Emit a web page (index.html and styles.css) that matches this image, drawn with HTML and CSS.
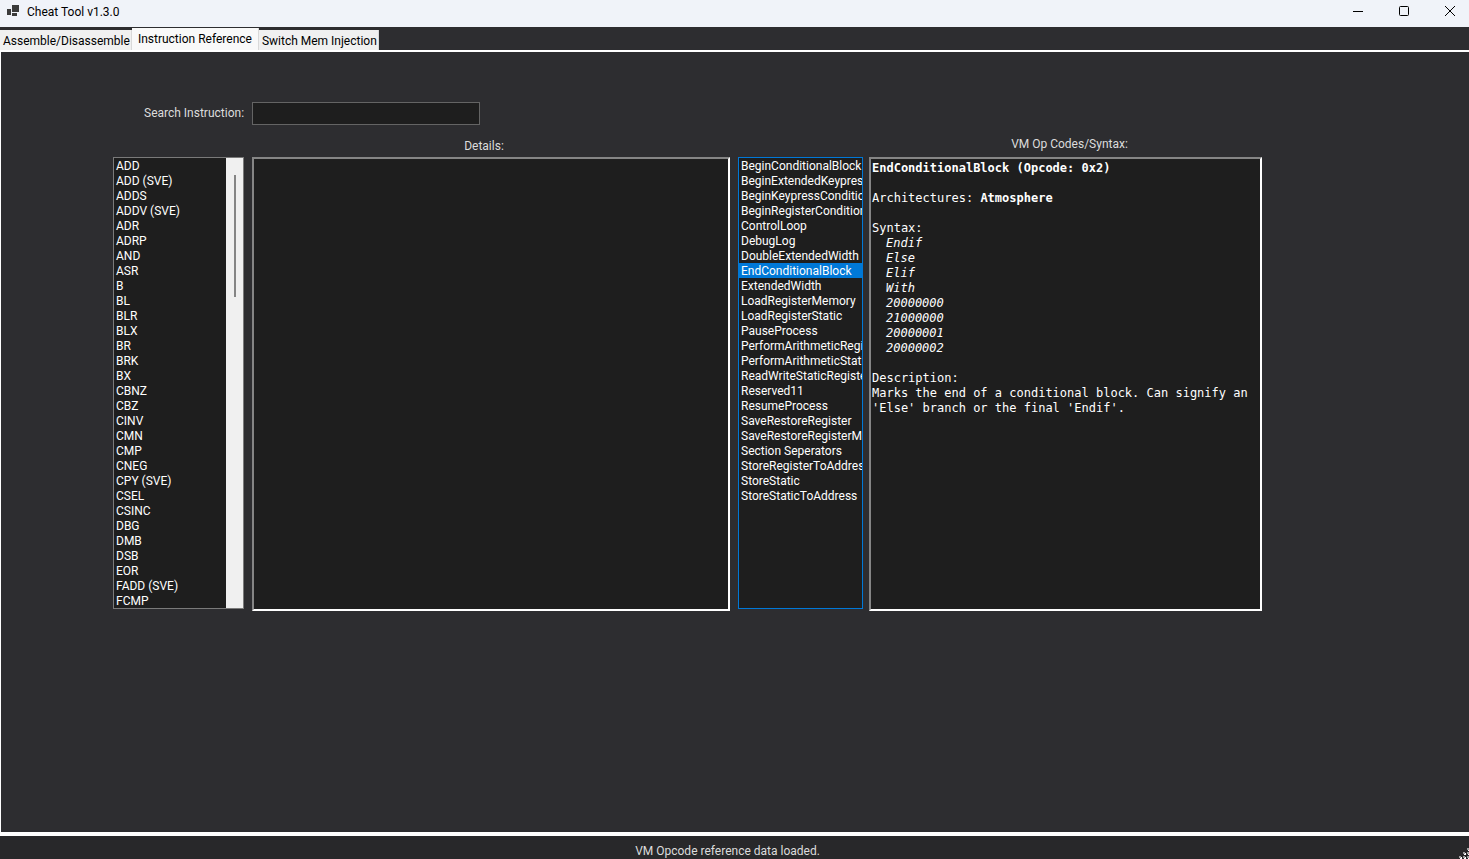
FILE: index.html
```
<!DOCTYPE html>
<html lang="en">
<head>
    <meta charset="UTF-8">
    <title>Cheat Tool v1.3.0</title>
    <link rel="stylesheet" href="styles.css">
</head>
<body>
    <header class="titlebar">
        <svg class="app-icon" width="14" height="14" viewBox="0 0 14 14">
            <path fill="#3b3b3b" d="M1 4h4v6H1zM6 0h7v7H6zM6 8h5v3H6z"/>
        </svg>
        <h1>Cheat Tool v1.3.0</h1>
        <div class="window-buttons">
            <button aria-label="Minimize">
                <svg width="12" height="12" viewBox="0 0 12 12"><path d="M1 6.5h10"/></svg>
            </button>
            <button aria-label="Maximize">
                <svg width="12" height="12" viewBox="0 0 12 12"><rect x="1.5" y="1.5" width="9" height="9" rx="1"/></svg>
            </button>
            <button aria-label="Close">
                <svg width="12" height="12" viewBox="0 0 12 12"><path d="M1 1l10 10M11 1L1 11"/></svg>
            </button>
        </div>
    </header>

    <nav class="tabs" role="tablist">
        <button class="tab" role="tab">Assemble/Disassemble</button>
        <button class="tab active" role="tab" aria-selected="true">Instruction Reference</button>
        <button class="tab" role="tab">Switch Mem Injection</button>
    </nav>

    <main class="page">
        <div class="search">
            <label for="search">Search Instruction:</label>
            <input type="text" id="search">
        </div>

        <div class="panels">
            <div class="list-box">
                <select id="instructions" size="30" aria-label="Instructions">
                    <option>ADD</option>
                    <option>ADD (SVE)</option>
                    <option>ADDS</option>
                    <option>ADDV (SVE)</option>
                    <option>ADR</option>
                    <option>ADRP</option>
                    <option>AND</option>
                    <option>ASR</option>
                    <option>B</option>
                    <option>BL</option>
                    <option>BLR</option>
                    <option>BLX</option>
                    <option>BR</option>
                    <option>BRK</option>
                    <option>BX</option>
                    <option>CBNZ</option>
                    <option>CBZ</option>
                    <option>CINV</option>
                    <option>CMN</option>
                    <option>CMP</option>
                    <option>CNEG</option>
                    <option>CPY (SVE)</option>
                    <option>CSEL</option>
                    <option>CSINC</option>
                    <option>DBG</option>
                    <option>DMB</option>
                    <option>DSB</option>
                    <option>EOR</option>
                    <option>FADD (SVE)</option>
                    <option>FCMP</option>
                </select>
                <div class="scrollbar"><div class="thumb"></div></div>
            </div>

            <section class="details">
                <h2>Details:</h2>
                <div class="text-box"></div>
            </section>

            <div class="list-box focused">
                <select id="opcodes" size="30" aria-label="VM Op Codes">
                    <option>BeginConditionalBlock</option>
                    <option>BeginExtendedKeypressConditionalBlock</option>
                    <option>BeginKeypressConditionalBlock</option>
                    <option>BeginRegisterConditionalBlock</option>
                    <option>ControlLoop</option>
                    <option>DebugLog</option>
                    <option>DoubleExtendedWidth</option>
                    <option selected>EndConditionalBlock</option>
                    <option>ExtendedWidth</option>
                    <option>LoadRegisterMemory</option>
                    <option>LoadRegisterStatic</option>
                    <option>PauseProcess</option>
                    <option>PerformArithmeticRegister</option>
                    <option>PerformArithmeticStatic</option>
                    <option>ReadWriteStaticRegister</option>
                    <option>Reserved11</option>
                    <option>ResumeProcess</option>
                    <option>SaveRestoreRegister</option>
                    <option>SaveRestoreRegisterMask</option>
                    <option>Section Seperators</option>
                    <option>StoreRegisterToAddress</option>
                    <option>StoreStatic</option>
                    <option>StoreStaticToAddress</option>
                </select>
            </div>

            <section class="syntax">
                <h2>VM Op Codes/Syntax:</h2>
                <div class="text-box">
                    <p><b>EndConditionalBlock (Opcode: 0x2)</b></p>
                    <p>Architectures: <b>Atmosphere</b></p>
                    <div>Syntax:</div>
                    <p class="code">Endif<br>Else<br>Elif<br>With<br>20000000<br>21000000<br>20000001<br>20000002</p>
                    <div>Description:</div>
                    <div>Marks the end of a conditional block. Can signify an 'Else' branch or the final 'Endif'.</div>
                </div>
            </section>
        </div>
    </main>

    <footer class="status">
        <span>VM Opcode reference data loaded.</span>
        <svg class="grip" width="10" height="12" viewBox="0 0 10 12">
            <path fill="#fff" d="M9 2h1v2H9zM5 6h2v2H5zM9 6h1v2H9zM1 10h2v2H1zM5 10h2v2H5zM9 10h1v2H9z"/>
            <path fill="#a0a0a0" d="M8 1h2v2H8zM4 5h2v2H4zM8 5h2v2H8zM0 9h2v2H0zM4 9h2v2H4zM8 9h2v2H8z"/>
        </svg>
    </footer>
</body>
</html>
```

FILE: styles.css
```
* {
    box-sizing: border-box;
}
body {
    margin: 0;
    min-height: 100vh;
    display: flex;
    flex-direction: column;
    background-color: #2d2d30;
    color: #dcdcdc;
    font-family: Roboto, "Open Sans", sans-serif;
    font-size: 12px;
    line-height: 15px;
}
h1, h2, p {
    margin: 0;
    font-size: 12px;
    font-weight: normal;
}
button, input, select {
    font: inherit;
    color: inherit;
}

/* title bar */
.titlebar {
    display: flex;
    align-items: center;
    height: 27px;
    padding-left: 6px;
    padding-bottom: 4px;
    background: #f0f3f9;
    color: #000;
}
.titlebar h1 {
    padding-top: 2px;
}
.app-icon {
    margin-right: 7px;
}
.window-buttons {
    display: flex;
    gap: 8px;
    margin-left: auto;
}
.window-buttons button {
    display: flex;
    justify-content: center;
    width: 38px;
    padding: 0 0 2px;
    border: none;
    background: none;
}
.window-buttons svg {
    fill: none;
    stroke: #000;
}

/* tabs */
.tabs {
    display: flex;
    align-items: flex-end;
    height: 25px;
    border-bottom: 2px solid #fff;
}
.tab {
    height: 20px;
    padding: 2px 1px 0 3px;
    border: none;
    border-right: 1px solid #d9d9d9;
    background: #f0f0f0;
    color: #000;
    white-space: nowrap;
}
.tab.active {
    height: 22px;
    padding: 0 6px;
    background: #f9f9f9;
}

/* page */
.page {
    flex: 1;
    padding: 50px 207px 50px 112px;
    border-left: 1px solid #fff;
}
.search {
    display: flex;
    align-items: center;
    gap: 10px;
    padding-left: 31px;
    margin-bottom: 11px;
}
.search label {
    width: 98px;
    white-space: nowrap;
}
.search input {
    width: 228px;
    height: 23px;
    border: 1px solid #646464;
    background: #1e1e1e;
    outline: none;
}
.panels {
    display: grid;
    grid-template-columns: 131px minmax(0, 478fr) 125px minmax(0, 391fr);
    column-gap: 8px;
}
.list-box {
    display: flex;
    height: 452px;
    margin-top: 21px;
    border: 1px solid #7a7a7a;
    background: #1e1e1e;
}
.list-box.focused {
    border-color: #0078d7;
}
select {
    flex: 1;
    min-width: 0;
    padding: 0;
    border: none;
    outline: none;
    background: #1e1e1e;
    color: #fff;
    overflow: hidden;
    scrollbar-width: none;
}
option {
    height: 15px;
    min-height: 15px;
    padding: 1px 2px 0;
    line-height: 14px;
}
option:checked {
    background: #0078d7 linear-gradient(#0078d7, #0078d7);
    color: #fff;
}
.scrollbar {
    width: 17px;
    padding: 17px 6px 17px 8px;
    background: #f0f0f0;
}
.thumb {
    width: 2px;
    height: 122px;
    background: #858585;
}
h2 {
    height: 21px;
    padding-top: 1px;
    text-align: center;
}
.details h2 {
    padding: 3px 14px 0 0;
}
.syntax {
    margin-left: -2px;
}
.syntax h2 {
    padding-left: 8px;
}
.text-box {
    height: 454px;
    padding: 2px 1px;
    border: 2px solid #fff;
    border-top-color: #858585;
    border-left-color: #858585;
    background: #1e1e1e;
    color: #fff;
    font-family: "DejaVu Sans Mono", monospace;
}
.text-box p {
    margin-bottom: 15px;
}
.code {
    padding-left: 14px;
    font-style: italic;
}

/* status bar */
.status {
    position: relative;
    height: 27px;
    padding-top: 8px;
    border-top: 4px solid #fff;
    background: #28282a;
    text-align: center;
}
.status span {
    margin-right: 14px;
}
.grip {
    position: absolute;
    right: 0;
    bottom: 0;
}
```
